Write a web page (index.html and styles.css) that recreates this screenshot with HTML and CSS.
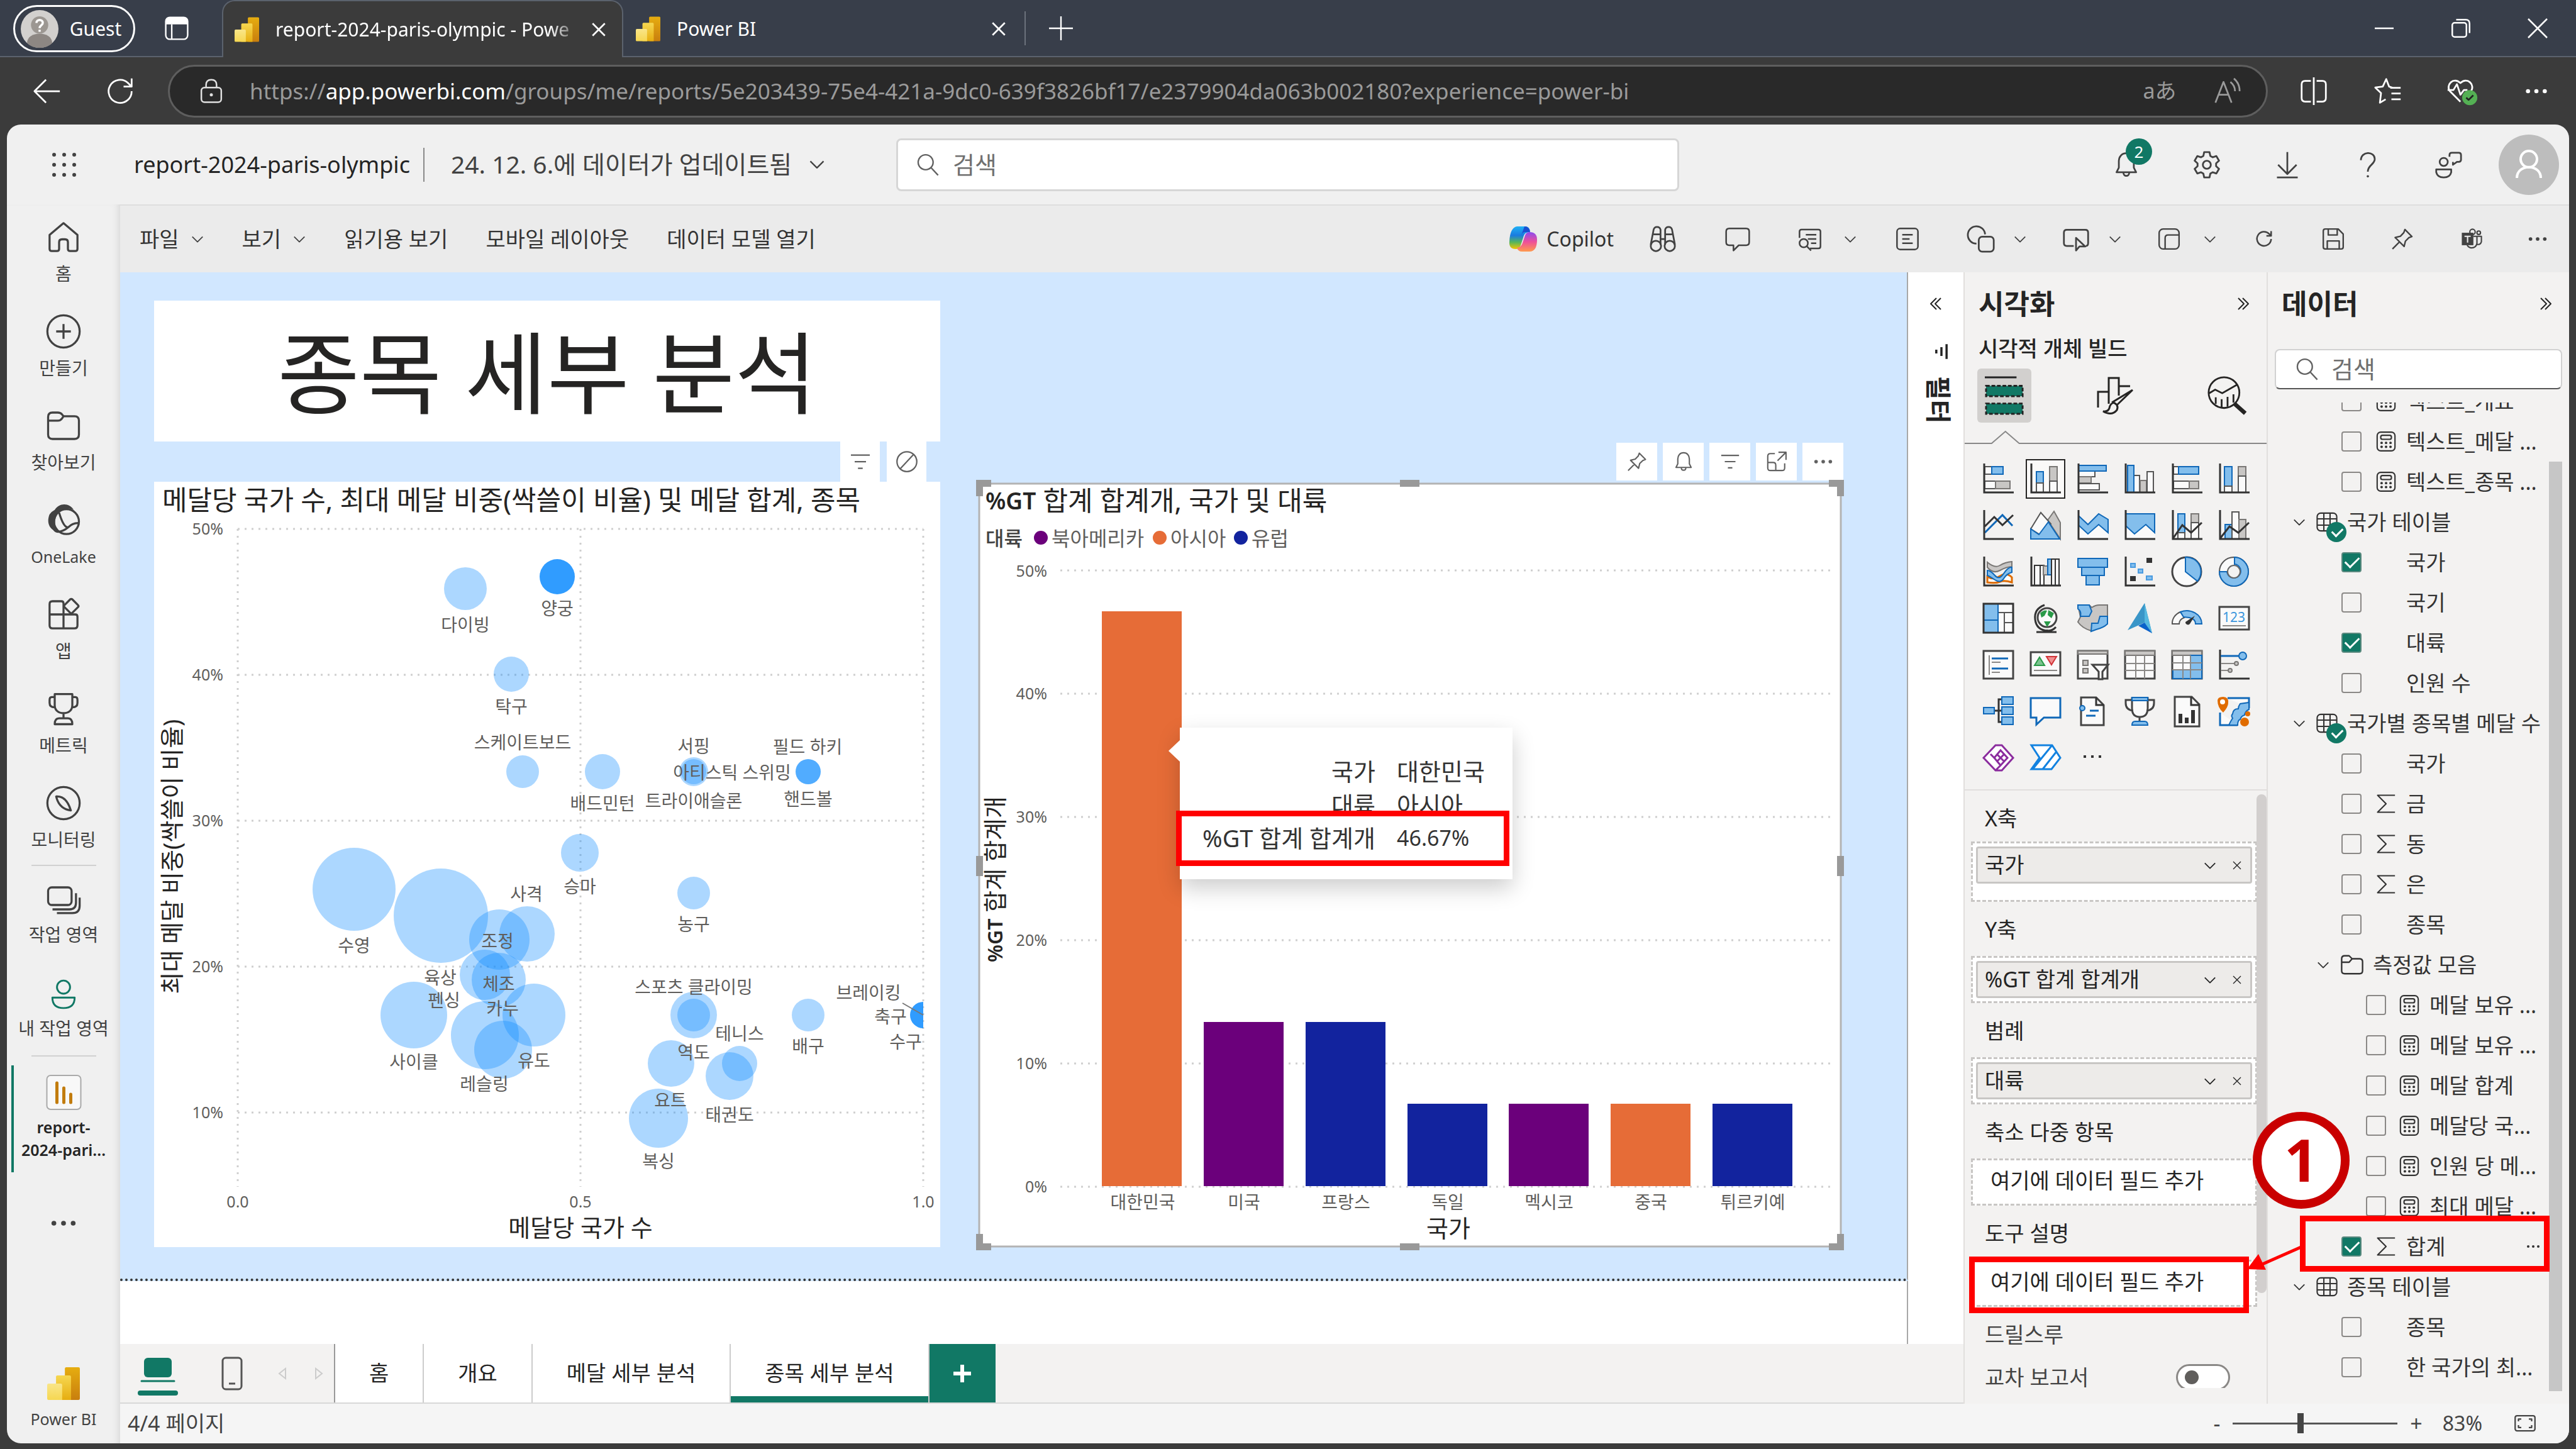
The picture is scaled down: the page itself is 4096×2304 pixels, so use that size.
FILE: index.html
```html
<!DOCTYPE html>
<html lang="ko">
<head>
<meta charset="utf-8">
<title>report-2024-paris-olympic - Power BI</title>
<link rel="stylesheet" href="styles.css">
</head>
<body>
<svg class="defs" aria-hidden="true">
  <defs>
    <linearGradient id="pb1" x1="0" y1="0" x2="0" y2="1"><stop offset="0" stop-color="#e6ad10"/><stop offset="1" stop-color="#c87e0e"/></linearGradient>
    <linearGradient id="pb2" x1="0" y1="0" x2="0" y2="1"><stop offset="0" stop-color="#f6d751"/><stop offset="1" stop-color="#e6ad10"/></linearGradient>
    <linearGradient id="pb3" x1="0" y1="0" x2="0" y2="1"><stop offset="0" stop-color="#f9e589"/><stop offset="1" stop-color="#f6d751"/></linearGradient>
    <linearGradient id="cp1" x1="0" y1="0" x2="0" y2="1"><stop offset="0" stop-color="#1fb0f5"/><stop offset=".4" stop-color="#1a7be0"/><stop offset=".7" stop-color="#57b65a"/><stop offset="1" stop-color="#f5c400"/></linearGradient>
    <linearGradient id="cp2" x1="0" y1="0" x2="0" y2="1"><stop offset="0" stop-color="#8a4cf0"/><stop offset=".5" stop-color="#ee4f9a"/><stop offset="1" stop-color="#ff9a4d"/></linearGradient>
    <symbol id="i-pbi" viewBox="0 0 24 24"><rect x="13" y="0" width="11" height="24" rx="1" fill="url(#pb1)"/><path d="M6.500 7q0-1 1-1h9q1 0 1 1v17h-11z" fill="url(#pb2)"/><path d="M0 13q0-1 1-1h9q1 0 1 1v11H1q-1 0-1-1z" fill="url(#pb3)"/></symbol>
    <symbol id="i-chev" viewBox="0 0 24 24"><path d="M3 8l9 9 9-9"/></symbol>
    <symbol id="i-x" viewBox="0 0 24 24"><path d="M3 3l18 18M21 3L3 21"/></symbol>
    <symbol id="i-search" viewBox="0 0 24 24"><circle cx="10" cy="9.500" r="7.500"/><path d="M15.500 15l7 7.500"/></symbol>
    <symbol id="i-dots" viewBox="0 0 24 24"><g class="solid"><circle cx="4" cy="12" r="2"/><circle cx="12" cy="12" r="2"/><circle cx="20" cy="12" r="2"/></g></symbol>
    <symbol id="i-pin" viewBox="0 0 24 24"><path d="M14.500 2.500l7 7-3 1.200-3.500 3.500-1.300 5.300-9-9L10 9.200l3.400-3.600zM9 15l-7 7"/></symbol>
    <symbol id="i-bell" viewBox="0 0 24 24"><path d="M12 2c4 0 6.500 3 6.500 7v5.500l2 4h-17l2-4V9c0-4 2.500-7 6.500-7zM9.500 19c0 3.500 5 3.500 5 0"/></symbol>
    <symbol id="i-filter" viewBox="0 0 24 24"><path d="M2 5h20M6 12h12M9.500 19h5"/></symbol>
    <symbol id="i-calc" viewBox="0 0 24 24"><rect x="2" y="1.500" width="20" height="21" rx="4"/><rect x="6" y="5" width="12" height="4.500" rx="2"/><g class="solid"><circle cx="7" cy="13.500" r="1.400"/><circle cx="12" cy="13.500" r="1.400"/><circle cx="17" cy="13.500" r="1.400"/><circle cx="7" cy="18" r="1.400"/><circle cx="12" cy="18" r="1.400"/><circle cx="17" cy="18" r="1.400"/></g></symbol>
    <symbol id="i-sum" viewBox="0 0 24 24"><path d="M22 2.500H2.500L12 12l-9.500 9.500H22"/></symbol>
    <symbol id="i-table" viewBox="0 0 24 24"><rect x="1" y="2" width="22" height="20" rx="4"/><path d="M8.500 2v20M15.500 2v20M1 8.500h22M1 15.500h22"/></symbol>
    <symbol id="i-folder" viewBox="0 0 24 24"><path d="M1.500 6q0-3 3-3H9l3 3h7.500q3 0 3 3v9q0 3-3 3h-15q-3 0-3-3zM1.500 9.500H9L12 6"/></symbol>
    <symbol id="i-dbl" viewBox="0 0 24 24"><path d="M4 3l9 9-9 9M11 3l9 9-9 9"/></symbol>
  </defs>
</svg>

<header class="browser">
  <div class="tabstrip">
    <button class="profile"><svg viewBox="0 0 24 24"><circle cx="12" cy="12" r="12" fill="#d2d0ce"/><path d="M4 21c0-8 16-8 16 0-4 4-12 4-16 0z" fill="#8d8783"/><circle cx="12" cy="9.500" r="5.500" fill="#9c9792"/><path d="M10 8.200c0-2.600 4-2.600 4 0 0 1.500-2 1.500-2 3.300M12 12.500v1.300" fill="none" stroke="#fff" stroke-width="1.400"/></svg>Guest</button>
    <button class="tabmenu" aria-label="탭 작업 메뉴"><svg class="ico w38" viewBox="0 0 24 24"><rect x="1" y="1" width="22" height="22" rx="4"/><path class="solid" d="M1 8V5q0-4 4-4h14q4 0 4 4v3z"/><path d="M7 8v15"/></svg></button>
    <div class="tab active"><svg class="pbi"><use href="#i-pbi"/></svg><span>report-2024-paris-olympic - Powe</span><button aria-label="닫기"><svg class="ico w26"><use href="#i-x"/></svg></button></div>
    <div class="tab"><svg class="pbi"><use href="#i-pbi"/></svg><span>Power BI</span><button aria-label="닫기"><svg class="ico w26"><use href="#i-x"/></svg></button></div>
    <button class="newtab" aria-label="새 탭"><svg class="ico w38" viewBox="0 0 24 24"><path d="M12 0v24M0 12h24"/></svg></button>
    <div class="winbtns">
      <button aria-label="최소화"><svg class="ico w30" viewBox="0 0 24 24"><path d="M0 12h24"/></svg></button>
      <button aria-label="복원"><svg class="ico w30" viewBox="0 0 24 24"><rect x="1" y="5" width="18" height="18" rx="3"/><path d="M6 1h12q5 0 5 5v12"/></svg></button>
      <button aria-label="닫기"><svg class="ico w30" viewBox="0 0 24 24"><path d="M0 0l24 24M24 0L0 24"/></svg></button>
    </div>
  </div>
  <div class="navbar">
    <button aria-label="뒤로"><svg class="ico w44" viewBox="0 0 24 24"><path d="M23 12H1M11 2L1 12l10 10"/></svg></button>
    <button aria-label="새로 고침"><svg class="ico w44" viewBox="0 0 24 24"><path d="M22 12a10 10 0 1 1-3-7l3 3M22 1v7h-7"/></svg></button>
    <div class="address">
      <svg class="ico w40" viewBox="0 0 24 24"><rect x="2.500" y="8.500" width="19" height="14" rx="3"/><path d="M7 8V6q0-5 5-5t5 5v2"/><circle class="solid" cx="12" cy="15.500" r="1.500"/></svg>
      <span class="url">https://<b>app.powerbi.com</b>/groups/me/reports/5e203439-75e4-421a-9dc0-639f3826bf17/e2379904da063b002180?experience=power-bi</span>
      <button class="lang" aria-label="번역">aあ</button>
      <button aria-label="소리내어 읽기"><svg class="ico w44" viewBox="0 0 24 24"><path d="M2 22L9 4l7 18M4.500 15h9M15 4q4 3 4 8M18 1q5 4 5 11"/></svg></button>
    </div>
    <button class="nb" aria-label="분할 화면"><svg class="ico w44" viewBox="0 0 24 24"><path d="M12 0v24M9.500 3H4.500q-3 0-3 3v12q0 3 3 3h5M14.500 3h5q3 0 3 3v12q0 3-3 3h-5"/></svg></button>
    <button class="nb" aria-label="즐겨찾기"><svg class="ico w44" viewBox="0 0 24 24"><path d="M16 9l-3-1-2.500-6.500L7.500 8 1 8.800l5 4.800L5 22l5-3M14 9h9M15 14h8M15 19h8"/></svg></button>
    <button class="nb" aria-label="브라우저 필수 요소"><svg class="ico w50" viewBox="0 0 27 24"><path d="M12 21L3 12C-1 7 6-1 12 5c6-6 13 2 9 7M1 11h5l3-5 3 9 3-4h3"/><circle cx="20" cy="17.500" r="6.500" fill="#54b054" stroke="none"/><path d="M17 17.500l2 2 4-4" stroke="#222"/></svg></button>
    <button class="nb" aria-label="더 보기"><svg class="ico w40"><use href="#i-dots"/></svg></button>
  </div>
</header>

<div class="app">
  <header class="top">
    <div class="crumb">
      <button class="waffle" aria-label="앱 시작 관리자"><svg viewBox="0 0 38 38"><g fill="#424242"><circle cx="3" cy="3" r="3"/><circle cx="19" cy="3" r="3"/><circle cx="35" cy="3" r="3"/><circle cx="3" cy="19" r="3"/><circle cx="19" cy="19" r="3"/><circle cx="35" cy="19" r="3"/><circle cx="3" cy="35" r="3"/><circle cx="19" cy="35" r="3"/><circle cx="35" cy="35" r="3"/></g></svg></button>
      <h1>report-2024-paris-olympic</h1>
      <button class="updated">24. 12. 6.에 데이터가 업데이트됨<svg class="ico w28"><use href="#i-chev"/></svg></button>
    </div>
    <label class="search"><svg class="ico w38"><use href="#i-search"/></svg><input type="search" placeholder="검색" aria-label="검색"></label>
    <div class="account">
      <button class="notify" aria-label="알림"><svg class="ico w44"><use href="#i-bell"/></svg><span class="badge">2</span></button>
      <button aria-label="설정"><svg class="ico w46" viewBox="0 0 24 24"><circle cx="12" cy="12" r="3.300"/><path d="M9.800 1.500h4.400l.7 3.200 1.900 1.100 3.100-1 2.200 3.800-2.400 2.200v2.400l2.400 2.200-2.200 3.800-3.100-1-1.900 1.100-.7 3.200H9.800l-.7-3.200-1.900-1.100-3.100 1-2.200-3.800 2.400-2.200v-2.400L1.900 8.600l2.200-3.800 3.100 1 1.900-1.100z"/></svg></button>
      <button aria-label="다운로드"><svg class="ico w44" viewBox="0 0 24 24"><path d="M12 1v18M4 12l8 8 8-8M3 23h18"/></svg></button>
      <button aria-label="도움말"><svg class="ico w44" viewBox="0 0 24 24"><path d="M6 8c0-8 12-8 12-1 0 5-6 5-6 11"/><circle class="solid" cx="12" cy="22" r="1"/></svg></button>
      <button aria-label="피드백"><svg class="ico w44" viewBox="0 0 24 24"><circle cx="8" cy="9.500" r="3.500"/><path d="M1.500 16h13v2.500q-1 4.500-6.500 4.500t-6.500-4.500zM13 5V3.500q0-2 2-2h6q2 0 2 2v4q0 2-2 2h-1.500L16 12V9.500"/></svg></button>
      <button aria-label="계정"><svg class="avatar" viewBox="0 0 96 96"><circle cx="48" cy="48" r="48" fill="#bdbdbd"/><circle cx="48" cy="39" r="13"/><path d="M29 69c0-23 38-23 38 0"/></svg></button>
    </div>
  </header>

  <nav class="rail">
    <a href="#home"><svg class="ico w56" viewBox="0 0 24 24"><path d="M2.500 10.500L12 2.500l9.500 8V20q0 1.500-1.500 1.500h-3.500q-1.500 0-1.500-1.500v-4.500q0-2-2-2h-2q-2 0-2 2V20q0 1.500-1.500 1.500H4q-1.500 0-1.500-1.500z"/></svg><span>홈</span></a>
    <a href="#create"><svg class="ico w56" viewBox="0 0 24 24"><circle cx="12" cy="12" r="11"/><path d="M12 7v10M7 12h10"/></svg><span>만들기</span></a>
    <a href="#browse"><svg class="ico w56" viewBox="0 0 24 24"><path d="M1.500 6q0-3 3-3H8q2 0 3 1.300L12 5.500h7.500q3 0 3 3V18q0 3-3 3h-15q-3 0-3-3zM1.500 8.500H8q2 0 3-1.500l1-1.500"/></svg><span>찾아보기</span></a>
    <a href="#onelake"><svg class="ico w56" viewBox="0 0 24 24"><ellipse cx="14" cy="13" rx="8.500" ry="8.500"/><path d="M5.500 14C4 20 8 21 12 19s5-5 10-5M9 7q3 10 6 10"/><path class="solid" d="M6 5c3-5 10-5 13 0-4-2-8 0-9 1-4 3-5 8-2 14C3 19 0 14 2.500 8q1.500-2 3.500-3z"/></svg><span class="en">OneLake</span></a>
    <a href="#apps"><svg class="ico w56" viewBox="0 0 24 24"><path d="M12 12V4.500Q12 3 10.500 3h-6Q2.500 3 2.500 5v14.500q0 2 2 2h15q2 0 2-2v-6q0-1.500-1.500-1.500H2.500M12 12v9.500"/><rect x="13.500" y="2.500" width="7.500" height="7.500" rx="1" transform="rotate(45 17.200 6.300)"/></svg><span>앱</span></a>
    <a href="#metrics"><svg class="ico w56" viewBox="0 0 24 24"><path d="M6 2h12v7.500c0 3.500-2.500 5.500-6 5.500s-6-2-6-5.500zM6 4H4Q2.500 4 2.500 6v2q0 3 3.500 3M18 4h2q1.500 0 1.500 2v2q0 3-3.500 3M12 15v3.500M6 22.500q0-4 3-4h6q3 0 3 4z"/></svg><span>메트릭</span></a>
    <a href="#monitor"><svg class="ico w56" viewBox="0 0 24 24"><circle cx="12" cy="12" r="11"/><path d="M7 7.500q7-.5 10 9.500-8-1-10-9.500z"/></svg><span>모니터링</span></a>
    <hr>
    <a class="tight" href="#workspaces"><svg class="ico w56" viewBox="0 0 24 24"><rect x="1.500" y="3" width="16" height="12" rx="2.500"/><path d="M4.500 18H16q4.500 0 4.500-4.500V7M7.500 20.500H18q5 0 5-5V10"/></svg><span>작업 영역</span></a>
    <a class="tight me" href="#my"><svg class="ico w56" viewBox="0 0 24 24"><circle cx="12" cy="6.500" r="5"/><path d="M3.500 14.500h17q0 8-8.500 8t-8.500-8z"/></svg><span>내 작업 영역</span></a>
    <hr>
    <a class="current" href="#report"><svg class="rep" viewBox="0 0 56 56"><rect x="1" y="1" width="54" height="54" rx="6" fill="#f8f8f8" stroke="#aaa" stroke-width="2"/><path d="M17 13v31M28 21v23M39 31v13" stroke="#c27c0e" stroke-width="5" stroke-linecap="round"/></svg><span class="en">report-<br>2024-pari...</span></a>
    <button class="more" aria-label="더 보기"><svg class="ico w50"><use href="#i-dots"/></svg></button>
    <a class="brand" href="#pbi"><svg class="logo"><use href="#i-pbi"/></svg><span class="en">Power BI</span></a>
  </nav>

  <div class="work">
    <div class="ribbon">
      <button>파일<svg class="ico w22"><use href="#i-chev"/></svg></button>
      <button>보기<svg class="ico w22"><use href="#i-chev"/></svg></button>
      <button>읽기용 보기</button>
      <button>모바일 레이아웃</button>
      <button>데이터 모델 열기</button>
      <div class="tools">
        <button class="copilot"><svg viewBox="0 0 44 40"><path d="M12 0h14q5 0 7 7l-5 3q-4 0-6 8l-4 12q-2 6-8 6-11 0-10-12Q1 2 12 0z" fill="url(#cp1)"/><path d="M24 0q8 0 9 9h-8q-4 0-6 5z" fill="#1b4fd0"/><path d="M32 9q12 0 12 12 0 19-12 19H20q-6 0-8-6 7-1 9-8l4-12q2-5 7-5z" fill="url(#cp2)"/></svg>Copilot</button>
        <button class="t" aria-label="찾기"><svg class="ico w44" viewBox="0 0 24 24"><circle cx="6" cy="18" r="4.500"/><circle cx="18" cy="18" r="4.500"/><path d="M1.500 17L4 4q.5-2.500 3-2.500T10 4v13M22.500 17L20 4q-.5-2.500-3-2.500T14 4v13M4 8h6M14 8h6M10 12h4"/></svg></button>
        <button class="t" aria-label="메모"><svg class="ico w40" viewBox="0 0 24 24"><path d="M4 2h16q3 0 3 3v10q0 3-3 3h-7l-5 5v-5H4q-3 0-3-3V5q0-3 3-3z"/></svg></button>
        <button class="d" aria-label="탐색"><svg class="ico w40" viewBox="0 0 24 24"><path d="M2 11V5q0-2 2-2h16q2 0 2 2v14q0 2-2 2h-8M8 8h10M10 12h8M13 16h5"/><circle cx="6" cy="16" r="4"/><path d="M9 19l4 4"/></svg><svg class="ico w22"><use href="#i-chev"/></svg></button>
        <button class="t" aria-label="텍스트 상자"><svg class="ico w40" viewBox="0 0 24 24"><rect x="2" y="2" width="20" height="20" rx="3"/><path d="M7 8h10M7 12h7M7 16h10"/></svg></button>
        <button class="d" aria-label="도형"><svg class="ico w44" viewBox="0 0 24 24"><path d="M8 16a7.500 7.500 0 1 1 7.500-8"/><rect x="10" y="10" width="13" height="13" rx="3"/></svg><svg class="ico w22"><use href="#i-chev"/></svg></button>
        <button class="d" aria-label="단추"><svg class="ico w44" viewBox="0 0 24 24"><path d="M10 18H4q-2.500 0-2.500-2.500v-9Q1.500 4 4 4h16q2.500 0 2.500 2.500v9q0 2.500-2 2.500M12 11v11l3-3.500h5z"/></svg><svg class="ico w22"><use href="#i-chev"/></svg></button>
        <button class="d" aria-label="시각적 개체 상호 작용"><svg class="ico w38" viewBox="0 0 24 24"><rect x="2" y="2" width="20" height="20" rx="4"/><path d="M8 22V11q0-3 3-3h11"/></svg><svg class="ico w22"><use href="#i-chev"/></svg></button>
        <button class="s" aria-label="새로 고침"><svg class="ico w30" viewBox="0 0 24 24"><path d="M21 12a9 9 0 1 1-2.500-6.500L21 8M21 2v6h-6"/></svg></button>
        <button class="s" aria-label="저장"><svg class="ico w38" viewBox="0 0 24 24"><path d="M4 2h13l5 5v13q0 2-2 2H4q-2 0-2-2V4q0-2 2-2zM7 2v6h9V2M6 22v-8h12v8"/></svg></button>
        <button class="s" aria-label="고정"><svg class="ico w38"><use href="#i-pin"/></svg></button>
        <button class="s" aria-label="Teams"><svg class="ico w34" viewBox="0 0 24 24"><path class="solid" d="M1 5h13v14H1z"/><path d="M4 9h7M7.500 9v7" stroke="#ebebeb"/><circle cx="13" cy="4" r="3"/><circle cx="20" cy="5" r="2"/><path d="M14 9h4v8q-1 5-6 5-3 0-5-3M18 9h5v6q-1 4-5 3"/></svg></button>
        <button class="s" aria-label="더 보기"><svg class="ico w34"><use href="#i-dots"/></svg></button>
      </div>
    </div>

    <div class="stage">
      <main class="canvas">
        <div class="page">
          <section class="col">
            <h2 class="title-card">종목 세부 분석</h2>
            <div class="hover left">
              <button aria-label="필터"><svg class="ico w36"><use href="#i-filter"/></svg></button>
              <button aria-label="상호 작용 없음"><svg class="ico w36" viewBox="0 0 24 24"><circle cx="12" cy="12" r="10.500"/><path d="M19 4.500L5 19.500"/></svg></button>
            </div>
            <div class="visual">
              <svg class="chart" viewBox="0 0 1250 1217">
                <clipPath id="plot"><rect x="133" y="0" width="1090" height="1121"/></clipPath>
                <g class="grid"><path d="M133 75H1223M133 307H1223M133 539H1223M133 771H1223M133 1003H1223M133 75V1121M678 75V1121M1223 75V1121"/></g>
                <g class="bubbles" clip-path="url(#plot)">
                  <circle cx="495" cy="170" r="34"/><circle class="b3" cx="641" cy="151" r="28"/><circle cx="568" cy="306" r="28"/>
                  <circle cx="586" cy="461" r="26"/><circle cx="713" cy="461" r="28"/><circle cx="858" cy="461" r="23"/><circle cx="858" cy="461" r="20"/><circle class="b2" cx="1040" cy="461" r="20"/>
                  <circle cx="677" cy="590" r="30"/><circle cx="318" cy="648" r="66"/><circle cx="456" cy="690" r="75"/><circle cx="593" cy="719" r="44"/><circle cx="549" cy="728" r="48"/>
                  <circle cx="526" cy="784" r="40"/><circle cx="548" cy="792" r="43"/><circle cx="604" cy="848" r="50"/><circle cx="526" cy="880" r="54"/><circle cx="555" cy="903" r="46"/><circle cx="413" cy="848" r="53"/>
                  <circle cx="858" cy="654" r="26"/><circle cx="858" cy="848" r="37"/><circle cx="858" cy="848" r="26"/><circle cx="1040" cy="848" r="26"/>
                  <circle cx="931" cy="925" r="28"/><circle cx="915" cy="945" r="38"/><circle cx="822" cy="925" r="37"/><circle cx="802" cy="1012" r="47"/><circle class="b3" cx="1223" cy="848" r="21"/>
                </g>
                <path d="M1190 829L1223 848" stroke="#777" stroke-width="2"/>
                <text class="vtitle" x="13" y="28">메달당 국가 수, 최대 메달 비중(싹쓸이 비율) 및 메달 합계, 종목</text>
                <g class="ytick"><text x="110" y="74">50%</text><text x="110" y="306">40%</text><text x="110" y="538">30%</text><text x="110" y="770">20%</text><text x="110" y="1002">10%</text></g>
                <g class="xtick"><text x="133" y="1144">0.0</text><text x="678" y="1144">0.5</text><text x="1223" y="1144">1.0</text></g>
                <g class="names">
                  <text x="495" y="227">다이빙</text><text x="641" y="201">양궁</text><text x="568" y="357">탁구</text><text x="586" y="414">스케이트보드</text><text x="713" y="511">배드민턴</text>
                  <text x="858" y="420">서핑</text><text x="919" y="462">아티스틱 스위밍</text><text x="858" y="507">트라이애슬론</text><text x="1039" y="421">필드 하키</text><text x="1040" y="504">핸드볼</text>
                  <text x="677" y="643">승마</text><text x="318" y="737">수영</text><text x="455" y="788">육상</text><text x="592" y="655">사격</text><text x="546" y="730">조정</text><text x="461" y="824">펜싱</text><text x="548" y="798">체조</text><text x="554" y="837">카누</text>
                  <text x="604" y="920">유도</text><text x="525" y="957">레슬링</text><text x="413" y="922">사이클</text><text x="858" y="703">농구</text><text x="858" y="803">스포츠 클라이밍</text><text x="858" y="907">역도</text><text x="1040" y="897">배구</text>
                  <text x="931" y="877">테니스</text><text x="915" y="1006">태권도</text><text x="821" y="983">요트</text><text x="802" y="1080">복싱</text><text x="1136" y="812">브레이킹</text><text x="1171" y="850">축구</text><text x="1195" y="890">수구</text>
                </g>
                <g class="atitle"><text x="678" y="1185">메달당 국가 수</text><text transform="translate(27 596) rotate(-90)">최대 메달 비중(싹쓸이 비율)</text></g>
              </svg>
            </div>
          </section>
          <section class="col">
            <div class="hover right">
              <button aria-label="고정"><svg class="ico w34"><use href="#i-pin"/></svg></button>
              <button aria-label="알림"><svg class="ico w34"><use href="#i-bell"/></svg></button>
              <button aria-label="필터"><svg class="ico w34"><use href="#i-filter"/></svg></button>
              <button aria-label="포커스 모드"><svg class="ico w34" viewBox="0 0 24 24"><path d="M10 3H5Q2 3 2 6v13q0 3 3 3h13q3 0 3-3v-5M2 13h6q3 0 3 3v6M14 1.500h8.500V10M22.500 1.500L13 11"/></svg></button>
              <button aria-label="추가 옵션"><svg class="ico w34"><use href="#i-dots"/></svg></button>
            </div>
            <div class="visual selected">
              <svg class="chart" viewBox="0 0 1372 1215">
                <g class="grid"><path d="M130 139H1354M130 335H1354M130 531H1354M130 727H1354M130 923H1354M130 1119H1354"/></g>
                <g><rect class="as" x="196" y="204" width="127" height="914"/><rect class="na" x="358" y="857" width="127" height="261"/><rect class="eu" x="520" y="857" width="127" height="261"/><rect class="eu" x="682" y="987" width="127" height="131"/><rect class="na" x="843" y="987" width="127" height="131"/><rect class="as" x="1005" y="987" width="127" height="131"/><rect class="eu" x="1167" y="987" width="127" height="131"/></g>
                <text class="vtitle" x="11" y="27"><tspan class="sb">%GT</tspan> 합계 합계개, 국가 및 대륙</text>
                <g class="legend"><text class="md" x="11" y="87">대륙</text><circle class="na" cx="99" cy="87" r="11"/><text x="116" y="87">북아메리카</text><circle class="as" cx="288" cy="87" r="11"/><text x="305" y="87">아시아</text><circle class="eu" cx="417" cy="87" r="11"/><text x="434" y="87">유럽</text></g>
                <g class="ytick"><text x="109" y="139">50%</text><text x="109" y="334">40%</text><text x="109" y="530">30%</text><text x="109" y="726">20%</text><text x="109" y="922">10%</text><text x="109" y="1118">0%</text></g>
                <g class="names"><text x="261" y="1143">대한민국</text><text x="422" y="1143">미국</text><text x="584" y="1143">프랑스</text><text x="746" y="1143">독일</text><text x="907" y="1143">멕시코</text><text x="1069" y="1143">중국</text><text x="1231" y="1143">튀르키예</text></g>
                <g class="atitle"><text x="747" y="1184">국가</text><text transform="translate(25 630) rotate(-90)"><tspan class="sb">%GT</tspan> 합계 합계개</text></g>
                <path class="frame" d="M1 1H1371V1214H1z"/>
                <path class="handles" d="M-4-5H20V6H7V21H-4zM1376-5H1352V6H1365V21H1376zM-4 1220H20V1209H7V1194H-4zM1376 1220H1352V1209H1365V1194H1376zM670-5h31v11h-31zM670 1209h31v11h-31zM-4 593H7v32H-4zM1365 593h11v32h-11z"/>
              </svg>
              <div class="tip">
                <dl><dt>국가</dt><dd>대한민국</dd><dt>대륙</dt><dd>아시아</dd><dt>%GT 합계 합계개</dt><dd class="num">46.67%</dd></dl>
                <div class="mark"></div>
              </div>
            </div>
          </section>
        </div>
        <div class="below"></div>
        <div class="pagetabs">
          <div class="views">
            <button class="desk on" aria-label="데스크톱 레이아웃"><svg viewBox="0 0 64 62"><rect x="10" y="2" width="44" height="31" rx="6" fill="#117865"/><path d="M6 39h52" stroke="#117865" stroke-width="3" stroke-linecap="round"/><rect y="54" width="64" height="8" rx="4" fill="#117865"/></svg></button>
            <button class="phone" aria-label="모바일 레이아웃"><svg viewBox="0 0 34 54"><rect x="2" y="2" width="30" height="50" rx="5"/><path d="M12 43h10"/></svg></button>
            <button class="arrow" aria-label="이전"><svg viewBox="0 0 14 20"><path d="M12 2v16L2 10z"/></svg></button>
            <button class="arrow" aria-label="다음"><svg viewBox="0 0 14 20"><path d="M2 2v16l10-8z"/></svg></button>
          </div>
          <button class="pt">홈</button><button class="pt">개요</button><button class="pt">메달 세부 분석</button><button class="pt on">종목 세부 분석</button>
          <button class="add" aria-label="페이지 추가"><svg viewBox="0 0 28 28"><path d="M14 0v28M0 14h28"/></svg></button>
        </div>
      </main>

      <aside class="filters">
        <button aria-label="필터 창 확장"><svg class="ico w24 flip"><use href="#i-dbl"/></svg></button>
        <svg class="ico w28 turned"><use href="#i-filter"/></svg>
        <h3>필터</h3>
      </aside>

      <aside class="viz">
        <div class="ph"><h3>시각화</h3><button aria-label="접기"><svg class="ico w24"><use href="#i-dbl"/></svg></button></div>
        <h4>시각적 개체 빌드</h4>
        <div class="modes">
          <button class="on" aria-label="빌드"><svg viewBox="0 0 64 64"><path d="M0 2h52" stroke="#222" stroke-width="3"/><rect x="2" y="16" width="60" height="17" fill="#117865"/><rect x="2" y="45" width="60" height="17" fill="#117865"/><g fill="none" stroke="#222" stroke-width="3" stroke-dasharray="6 3"><rect x="2" y="16" width="60" height="17"/><rect x="2" y="45" width="60" height="17"/></g></svg></button>
          <button aria-label="서식"><svg viewBox="0 0 60 62" class="line"><path d="M2 50V25h17M19 44V3h16v28M35 16h18M57 22L32 46q-5-5-7-3-4 2-5 8-2 6-10 5 14 8 22-2 2-4 0-8M57 22L24 42"/></svg></button>
          <button aria-label="분석"><svg viewBox="0 0 66 64" class="line"><circle cx="28" cy="27" r="26"/><path d="M3 28l10-6 12 6 26-15M14 35v11M24 38v14M34 34v17M44 30v14"/><path d="M46 46l18 16" stroke-width="7"/></svg></button>
        </div>
        <svg class="notch" viewBox="0 0 482 24" preserveAspectRatio="none"><path d="M0 21H43L65 2L87 21H482"/></svg>
        <div class="gallery">
          <button aria-label="누적 가로 막대형"><svg viewBox="0 0 49 48"><rect class="w" x="3" y="5" width="11" height="12"/><rect class="b" x="14" y="5" width="18" height="12"/><rect class="w" x="3" y="28" width="17" height="12"/><rect class="g" x="20" y="28" width="23" height="12"/><path class="k" d="M2 0v46h47"/></svg></button>
          <button class="on" aria-label="누적 세로 막대형"><svg viewBox="0 0 49 48"><rect class="b" x="10" y="13" width="11" height="18"/><rect class="w" x="10" y="31" width="11" height="15"/><rect class="g" x="31" y="5" width="12" height="23"/><rect class="w" x="31" y="28" width="12" height="18"/><path class="k" d="M2 0v46h47"/></svg></button>
          <button aria-label="묶은 가로 막대형"><svg viewBox="0 0 49 48"><rect class="w" x="2" y="12" width="26" height="9"/><rect class="g" x="2" y="21" width="20" height="10"/><rect class="w" x="2" y="32" width="33" height="10"/><rect class="b" x="2" y="3" width="44" height="9"/><path class="k" d="M2 0v46h47"/></svg></button>
          <button aria-label="묶은 세로 막대형"><svg viewBox="0 0 49 48"><rect class="w" x="14" y="19" width="10" height="27"/><rect class="g" x="25" y="27" width="10" height="19"/><rect class="w" x="36" y="13" width="10" height="33"/><rect class="b" x="5" y="3" width="10" height="43"/><path class="k" d="M2 0v46h47"/></svg></button>
          <button aria-label="100% 누적 가로"><svg viewBox="0 0 49 48"><rect class="w" x="3" y="5" width="8" height="12"/><rect class="b" x="11" y="5" width="32" height="12"/><rect class="w" x="3" y="28" width="25" height="12"/><rect class="g" x="28" y="28" width="15" height="12"/><path class="k" d="M2 0v46h47"/></svg></button>
          <button aria-label="100% 누적 세로"><svg viewBox="0 0 49 48"><rect class="b" x="9" y="5" width="12" height="31"/><rect class="w" x="9" y="36" width="12" height="10"/><rect class="g" x="31" y="5" width="12" height="15"/><rect class="w" x="31" y="20" width="12" height="26"/><path class="k" d="M2 0v46h47"/></svg></button>

          <button aria-label="꺾은선형"><svg viewBox="0 0 49 48"><path class="bl" d="M3 36L31 8l16 17"/><path class="k" d="M3 26L18 11l13 13L48 8M2 0v46h47"/></svg></button>
          <button aria-label="영역형"><svg viewBox="0 0 49 48"><path class="g" d="M28 16L38 2l10 18v26z"/><path class="w" d="M1 30L17 4l16 18-16 18z"/><path class="b" d="M1 30l13 9 15-20 18 27H1z"/></svg></button>
          <button aria-label="누적 영역형"><svg viewBox="0 0 49 48"><path class="wf" d="M2 24l15 15 17-15 15 13v9H2z"/><path class="b" d="M2 9l15 14L34 6l15 9v21L34 23 17 38 2 24z"/><path class="k" d="M2 0v46h47"/></svg></button>
          <button aria-label="100% 누적 영역형"><svg viewBox="0 0 49 48"><path class="wf" d="M2 25l15 13 17-15 15 13v10H2z"/><path class="b" d="M2 6h46v30L34 23 16 38 2 25z"/><path class="k" d="M2 0v46h47"/></svg></button>
          <button aria-label="꺾은선형 및 누적 세로"><svg viewBox="0 0 49 48"><rect class="b" x="10" y="6" width="11" height="30"/><rect class="w" x="10" y="36" width="11" height="10"/><rect class="g" x="31" y="6" width="12" height="14"/><rect class="w" x="31" y="20" width="12" height="26"/><path class="k" d="M3 44L17 24l14 12L48 20M2 0v46h47"/></svg></button>
          <button aria-label="꺾은선형 및 묶은 세로"><svg viewBox="0 0 49 48"><rect class="b" x="10" y="23" width="11" height="23"/><rect class="w" x="21" y="3" width="11" height="43"/><rect class="g" x="32" y="15" width="11" height="31"/><path class="k" d="M3 44L17 26l14 10L48 20M2 0v46h47"/></svg></button>

          <button aria-label="리본"><svg viewBox="0 0 49 48"><path class="o" d="M7 32q10 6 20-1t19 2v8q-12-4-19-1t-20 1z"/><path class="g" d="M7 9q12 10 20 5t19-6v8q-8 0-19 6T7 17z"/><path class="b" d="M7 22q5 0 12 8t14-3 13-10v8q-8 2-13 10t-14 2-12-7z"/><path class="k" d="M2 0v46h47"/></svg></button>
          <button aria-label="폭포"><svg viewBox="0 0 49 48"><rect class="w d" x="7" y="14" width="9" height="32"/><rect class="w d" x="16" y="14" width="6" height="32"/><rect class="g" x="21" y="15" width="7" height="14"/><path class="b" d="M28 4h6v25h-6z"/><rect class="w d" x="34" y="4" width="6" height="42"/><rect class="w d" x="40" y="4" width="6" height="42"/><path class="k" d="M2 0v46h47"/></svg></button>
          <button aria-label="깔때기"><svg viewBox="0 0 49 48"><path class="b" d="M1 3h47v14H1zM7 17h36v13H7zM14 30h21v15H14z"/></svg></button>
          <button aria-label="분산형"><svg viewBox="0 0 49 48"><path class="k" d="M2 0v46h47"/><path class="kf" d="M35 2h9v8h-9zM9 31h9v8H9z"/><path class="bf" d="M10 11h7v6h-7zM22 20h7v6h-7zM35 31h9v6h-9z"/></svg></button>
          <button aria-label="원형"><svg viewBox="0 0 49 48"><circle class="w k1" cx="24" cy="24" r="23"/><path class="b" d="M22 1v23l19 15A23 23 0 0 0 22 1z"/></svg></button>
          <button aria-label="도넛형"><svg viewBox="0 0 49 48"><circle class="w" cx="24" cy="24" r="23"/><path class="b" d="M25 1A23 23 0 1 1 1 24h12a11 11 0 1 0 12-12z"/><circle class="pf" cx="24" cy="24" r="10"/></svg></button>

          <button aria-label="트리맵"><svg viewBox="0 0 49 48"><path class="w" d="M24 1h24v46H24zM24 15h24M34 15v32M34 31h14"/><path class="b" d="M1 1h23v46H1zM1 27h23"/><path class="k" d="M1 1h47v46H1z"/></svg></button>
          <button aria-label="지도"><svg viewBox="0 0 49 48"><circle class="w k1" cx="27" cy="23" r="15"/><path class="gf" d="M16 16q6-6 11-4l-4 8-5 3zM29 11l9 5-4 8-6-5zM22 29h11l-6 9z"/><path class="k" d="M23 3Q6 9 8 26t20 18q8 0 13-6M10 46h32M27 42v4"/></svg></button>
          <button aria-label="등치 지역도"><svg viewBox="0 0 49 48"><path class="g" d="M1 3h18l4 4q6-4 12-4h13v28q-6 6-18 9l-8 4Q8 40 1 30l4-8z"/><path class="b" d="M1 3h18l4 10-4 8H5q2-8-4-12zM23 32h10l3-11h12v12q-6 6-18 9l-8 3z"/></svg></button>
          <button aria-label="Azure 지도"><svg viewBox="0 0 49 48"><path d="M32 0L5 43l27-12 12 17z" fill="#3a96c8"/><path d="M32 0l12 48-12-17z" fill="#55b8e0"/><path d="M22 36l10-5 12 17z" fill="#0b62ca"/></svg></button>
          <button aria-label="계기"><svg viewBox="0 0 49 48"><path class="w" d="M1 33a23 20 0 0 1 13-19l6 9q-8 3-8 10z"/><path class="b" d="M14 14a24 21 0 0 1 34 19H38q0-8-10-10l-9-1z"/><path class="kf" d="M37 20l-8 13a4 4 0 0 1-7-3z"/></svg></button>
          <button aria-label="카드"><svg viewBox="0 0 49 48"><path class="w k1" d="M1 6h47v36H1z"/><path class="gl" d="M6 36h37"/><text x="24" y="30" class="n123">123</text></svg></button>

          <button aria-label="여러 행 카드"><svg viewBox="0 0 49 48"><path class="w k1" d="M1 2h47v44H1z"/><path class="gl" d="M10 9v31M14 20h14M14 36h13"/><path class="bl" d="M14 14h26M14 30h26"/></svg></button>
          <button aria-label="KPI"><svg viewBox="0 0 49 48"><path class="w k1" d="M1 4h47v37H1z"/><path d="M15 12l8 13H7z" fill="#7cc490" stroke="#2a9a48" stroke-width="2"/><path d="M34 24l8-13H26z" fill="#f09090" stroke="#d13438" stroke-width="2"/><path class="gl" d="M6 33h37"/></svg></button>
          <button aria-label="슬라이서"><svg viewBox="0 0 49 48"><path class="w k1" d="M1 2h47v44H1z"/><path class="g" d="M1 2h47v5H1zM9 17h8v8H9zM9 30h8v7H9z"/><path class="w k1" d="M24 24h25l-9 11v12h-6V35z"/></svg></button>
          <button aria-label="테이블"><svg viewBox="0 0 49 48"><path class="w k1" d="M1 2h47v44H1z"/><path class="g" d="M1 2h47v7H1z"/><path class="gl" d="M1 22h47M1 33h47M18 9v37M32 9v37"/></svg></button>
          <button aria-label="행렬"><svg viewBox="0 0 49 48"><path class="w k1" d="M1 2h47v44H1z"/><path class="g" d="M1 2h47v7H1z"/><path class="b" d="M30 9h18v37H2V32h28z"/><path class="gl" d="M1 21h47M1 32h47M18 9v37M30 9v37"/></svg></button>
          <button aria-label="주요 영향 요인"><svg viewBox="0 0 49 48"><path class="k" d="M2 0v46h47"/><path class="bl" d="M3 10h30"/><circle class="b" cx="38" cy="10" r="6"/><path class="gl" d="M3 22h22M3 33h12"/><circle class="g" cx="28" cy="22" r="3"/><circle class="g" cx="18" cy="33" r="3"/></svg></button>

          <button aria-label="분해 트리"><svg viewBox="0 0 49 48"><path class="k" d="M16 23h14M30 5h-5v36h5"/><path class="b" d="M1 18h17v10H1zM30 1h18v12H30zM30 17h18v12H30zM30 33h18v12H30z"/></svg></button>
          <button aria-label="Q&amp;A"><svg viewBox="0 0 49 48"><path class="wf bl" d="M1 3h47v31H22L10 45V34H1z"/></svg></button>
          <button aria-label="설명"><svg viewBox="0 0 49 48"><path class="w k1" d="M6 2h24l12 12v32H6z"/><path class="k" d="M30 2v12h12"/><path class="bl" d="M20 23h14M14 31h15"/><circle class="b" cx="8" cy="19" r="4"/></svg></button>
          <button aria-label="메트릭"><svg viewBox="0 0 49 48"><path class="w k1" d="M12 3h25v16q0 14-12.500 14T12 19zM12 6H2v5q0 11 12 12M37 6h10v5q0 11-12 12M24 33v8"/><path class="b" d="M12 2h25v5H12zM12 46q0-6 5-6h15q5 0 5 6z"/></svg></button>
          <button aria-label="페이지를 매긴 보고서"><svg viewBox="0 0 49 48"><path class="w k1" d="M5 1h27l12 12v35H5z"/><path class="k" d="M31 1v13h13"/><path class="kf" d="M11 28h6v15h-6zM21 34h6v9h-6zM31 22h6v21h-6z"/></svg></button>
          <button aria-label="ArcGIS"><svg viewBox="0 0 49 48"><path class="wf bl" d="M14 3h34v16M2 26v20h28"/><path class="b" d="M34 12q-3 4-3 8-8 0-9 8-3 3 0 7-4 6-6 11h14q0-8 4-9 2-6 7-7 1-6 7-9V10z"/><path d="M-2 7q0-6 9-6t8 10q0 6-8 15-9-8-9-19z" fill="#e06c00"/><circle cx="6" cy="9" r="4" fill="#fff"/><circle cx="41" cy="41" r="7" fill="#e06c00"/><circle cx="46" cy="28" r="4" fill="#e06c00"/></svg></button>

          <button aria-label="Power Apps"><svg viewBox="0 0 49 48"><path class="pl" d="M1 24L20 4h10l18 20-18 20H20zM28 12l11 12-11 12-10-12zM22 18l12 12M34 18L22 30M18 24l-6-6M20 44l8-8"/></svg></button>
          <button aria-label="Power Automate"><svg viewBox="0 0 49 48"><path class="al" d="M2 4h33l13 20-14 18H2l13-18zM35 4L4 42M42 14L20 42"/></svg></button>
          <button aria-label="더 많은 시각적 개체"><svg viewBox="0 0 49 48"><path class="kf" d="M10 20h4v4h-4zM22 20h4v4h-4zM34 20h4v4h-4z"/></svg></button>
        </div>
        <div class="wells">
          <h5>X축</h5>
          <div class="well tall"><div class="pill"><span>국가</span><svg class="ico w22"><use href="#i-chev"/></svg><svg class="ico w16"><use href="#i-x"/></svg></div></div>
          <h5>Y축</h5>
          <div class="well"><div class="pill"><span>%GT 합계 합계개</span><svg class="ico w22"><use href="#i-chev"/></svg><svg class="ico w16"><use href="#i-x"/></svg></div></div>
          <h5>범례</h5>
          <div class="well"><div class="pill"><span>대륙</span><svg class="ico w22"><use href="#i-chev"/></svg><svg class="ico w16"><use href="#i-x"/></svg></div></div>
          <h5>축소 다중 항목</h5>
          <div class="well empty">여기에 데이터 필드 추가</div>
          <h5>도구 설명</h5>
          <div class="well empty">여기에 데이터 필드 추가<div class="mark"></div></div>
          <h5 class="drill">드릴스루</h5>
          <label class="cross">교차 보고서<input type="checkbox" role="switch"></label>
          <div class="thumb"></div>
        </div>
      </aside>

      <aside class="data">
        <div class="ph"><h3>데이터</h3><button aria-label="접기"><svg class="ico w24"><use href="#i-dbl"/></svg></button></div>
        <label class="find"><svg class="ico w38"><use href="#i-search"/></svg><input type="search" placeholder="검색" aria-label="필드 검색"></label>
        <div class="tree">
          <label class="f"><input type="checkbox"><svg class="ico w34"><use href="#i-calc"/></svg><span>텍스트_개요</span></label>
          <label class="f"><input type="checkbox"><svg class="ico w34"><use href="#i-calc"/></svg><span>텍스트_메달 ...</span></label>
          <label class="f"><input type="checkbox"><svg class="ico w34"><use href="#i-calc"/></svg><span>텍스트_종목 ...</span></label>
          <div class="tb"><svg class="ico w22"><use href="#i-chev"/></svg><svg class="ico w34"><use href="#i-table"/></svg><i class="ok"></i><span>국가 테이블</span></div>
          <label class="f"><input type="checkbox" checked><i></i><span>국가</span></label>
          <label class="f"><input type="checkbox"><i></i><span>국기</span></label>
          <label class="f"><input type="checkbox" checked><i></i><span>대륙</span></label>
          <label class="f"><input type="checkbox"><i></i><span>인원 수</span></label>
          <div class="tb"><svg class="ico w22"><use href="#i-chev"/></svg><svg class="ico w34"><use href="#i-table"/></svg><i class="ok"></i><span>국가별 종목별 메달 수</span></div>
          <label class="f"><input type="checkbox"><i></i><span>국가</span></label>
          <label class="f"><input type="checkbox"><svg class="ico w34"><use href="#i-sum"/></svg><span>금</span></label>
          <label class="f"><input type="checkbox"><svg class="ico w34"><use href="#i-sum"/></svg><span>동</span></label>
          <label class="f"><input type="checkbox"><svg class="ico w34"><use href="#i-sum"/></svg><span>은</span></label>
          <label class="f"><input type="checkbox"><i></i><span>종목</span></label>
          <div class="tb sub"><svg class="ico w22"><use href="#i-chev"/></svg><svg class="ico w38"><use href="#i-folder"/></svg><span>측정값 모음</span></div>
          <label class="f sub"><input type="checkbox"><svg class="ico w34"><use href="#i-calc"/></svg><span>메달 보유 ...</span></label>
          <label class="f sub"><input type="checkbox"><svg class="ico w34"><use href="#i-calc"/></svg><span>메달 보유 ...</span></label>
          <label class="f sub"><input type="checkbox"><svg class="ico w34"><use href="#i-calc"/></svg><span>메달 합계</span></label>
          <label class="f sub"><input type="checkbox"><svg class="ico w34"><use href="#i-calc"/></svg><span>메달당 국...</span></label>
          <label class="f sub"><input type="checkbox"><svg class="ico w34"><use href="#i-calc"/></svg><span>인원 당 메...</span></label>
          <label class="f sub"><input type="checkbox"><svg class="ico w34"><use href="#i-calc"/></svg><span>최대 메달 ...</span></label>
          <label class="f"><input type="checkbox" checked><svg class="ico w34"><use href="#i-sum"/></svg><span>합계</span><svg class="ico w24 end"><use href="#i-dots"/></svg></label>
          <div class="tb"><svg class="ico w22"><use href="#i-chev"/></svg><svg class="ico w34"><use href="#i-table"/></svg><span>종목 테이블</span></div>
          <label class="f"><input type="checkbox"><i></i><span>종목</span></label>
          <label class="f"><input type="checkbox"><i></i><span>한 국가의 최...</span></label>
        </div>
        <div class="bar"></div>
        <div class="mark row-mark"></div>
        <svg class="pointer" viewBox="0 0 90 50"><path d="M88 5L20 35" stroke="#f00" stroke-width="5"/><path d="M0 41L18 17L30 42z" fill="#f00"/></svg>
        <div class="step">1</div>
      </aside>
    </div>

    <footer class="status">
      <span>4/4 페이지</span>
      <div class="zoom">
        <button>-</button><input type="range" min="10" max="190" value="83" aria-label="확대/축소"><button>+</button><output>83%</output>
        <button aria-label="페이지에 맞춤"><svg class="ico w36" viewBox="0 0 24 24"><rect x="1.500" y="4" width="21" height="16" rx="2"/><path d="M5 10V7.500h3M16 7.500h3V10M19 14v2.500h-3M8 16.500H5V14"/></svg></button>
      </div>
    </footer>
  </div>
</div>
</body>
</html>
```
FILE: styles.css
```css
* { box-sizing: border-box; margin: 0; padding: 0; }
body {
  height: 100vh; display: flex; flex-direction: column; overflow: hidden;
  background: #3b3b3b; color: #242424;
  font-family: "Noto Sans", "Noto Sans CJK KR", sans-serif; font-size: 34px; line-height: 1.2;
}
button, input { font: inherit; color: inherit; background: none; border: 0; outline: 0; }
button { display: flex; align-items: center; justify-content: center; white-space: nowrap; }
a { color: inherit; text-decoration: none; }
svg { display: block; flex: none; overflow: visible; }
.defs { position: absolute; width: 0; height: 0; }
h1, h2, h3, h4, h5 { font-weight: 400; white-space: nowrap; }

.ico { fill: none; stroke: currentColor; stroke-width: 1.5; stroke-linejoin: round; }
.ico .solid, symbol .solid { fill: currentColor; stroke: none; }
.solid { fill: currentColor; stroke: none; }
.w16 { width: 16px; height: 16px; stroke-width: 2; }
.w22 { width: 22px; height: 22px; stroke-width: 2; }
.w24 { width: 24px; height: 24px; stroke-width: 2; }
.w26 { width: 26px; height: 26px; stroke-width: 2.5; }
.w28 { width: 28px; height: 28px; stroke-width: 2; }
.w30 { width: 30px; height: 30px; stroke-width: 2; }
.w34 { width: 34px; height: 34px; }
.w36 { width: 36px; height: 36px; }
.w38 { width: 38px; height: 38px; }
.w40 { width: 40px; height: 40px; }
.w44 { width: 44px; height: 44px; }
.w46 { width: 46px; height: 46px; }
.w50 { width: 50px; height: 46px; }
.w56 { width: 56px; height: 56px; stroke-width: 1.4; }

/* browser chrome */
.browser { color: #fff; flex: none; }
.tabstrip { display: flex; height: 91px; background: #383e4a; border-bottom: 2px solid #5b626d; font-size: 30px; }
.profile { width: 194px; height: 75px; margin: 8px 0 0 21px; border: 3px solid #fff; border-radius: 38px; gap: 18px; }
.profile svg { width: 60px; height: 60px; margin-left: -10px; }
.tabmenu { width: 132px; }
.tab { width: 638px; height: 91px; display: flex; align-items: center; padding: 0 28px 0 20px; }
.tab.active { background: #3b3b3b; border: 2px solid #5b626d; border-bottom: 0; border-radius: 20px 20px 0 0; padding-left: 18px; margin-left: 6px; padding-right: 24px; }
.tab span { flex: 1; white-space: nowrap; line-height: 44px; margin: 0 16px 0 26px; }
.tab.active span { -webkit-mask-image: linear-gradient(90deg, #000 90%, transparent); mask-image: linear-gradient(90deg, #000 90%, transparent); }
.pbi { width: 39px; height: 42px; }
.newtab { width: 114px; border-left: 2px solid #6c727c; height: 54px; align-self: center; }
.winbtns { margin-left: auto; display: flex; }
.winbtns button { width: 122px; }
.navbar { display: flex; align-items: center; height: 107px; padding: 0 4px 0 17px; }
.navbar > button { width: 116px; }
.navbar > button.nb { width: 118px; }
.address { flex: 1; display: flex; align-items: center; height: 84px; margin: 0 14px 0 18px; padding: 0 40px 0 46px; background: #292929; border: 3px solid #5e5e5e; border-radius: 42px; font-size: 35px; color: #9a9a9a; }
.address > svg { color: #e0e0e0; }
.url { flex: 1; margin-left: 41px; white-space: nowrap; }
.url b { font-weight: 400; color: #fff; }
.lang { font-size: 34px; width: 114px; font-family: "Noto Sans", "Noto Sans CJK JP", sans-serif; }
.address button:last-child { width: 100px; margin-right: -28px; }

/* app shell */
.app { flex: 1; min-height: 0; margin: 0 11px 9px; display: grid; grid-template: 127px minmax(0, 1fr) / 180px minmax(0, 1fr); background: #f0f0f0; border-radius: 22px; overflow: hidden; }
.top { grid-column: 1 / -1; display: grid; grid-template-columns: 1414fr 1245fr 1415fr; align-items: center; color: #424242; }
.crumb { display: flex; align-items: center; }
.waffle { width: 181px; }
.waffle svg { width: 38px; height: 38px; }
h1 { margin-left: 21px; padding-right: 21px; border-right: 2px solid #8a8a8a; font-size: 36px; line-height: 54px; color: #242424; }
.updated { margin-left: 42px; font-size: 39px; gap: 26px; }
.search { height: 84px; display: flex; align-items: center; gap: 21px; padding-left: 28px; background: #fff; border: 3px solid #d6d6d6; border-radius: 8px; color: #616161; }
.search input { flex: 1; font-size: 38px; }
::placeholder { color: #707070; opacity: 1; }
.account { display: flex; justify-content: flex-end; align-items: center; }
.account button { width: 128px; }
.notify { position: relative; }
.badge { position: absolute; left: 63px; top: -20px; width: 42px; height: 42px; border-radius: 50%; background: #117865; color: #fff; font-size: 26px; line-height: 42px; }
.avatar { width: 96px; height: 96px; fill: none; stroke: #fff; stroke-width: 4; }
.avatar circle:first-child { stroke: none; }

/* left rail */
.rail { display: flex; flex-direction: column; align-items: center; padding-top: 3px; font-size: 28px; line-height: 40px; text-align: center; color: #424242; box-shadow: inset -10px 0 12px -8px #d4d4d4; }
.rail a { width: 100%; height: 150px; padding-top: 21px; display: flex; flex-direction: column; align-items: center; gap: 10px; white-space: nowrap; flex: none; }
.rail a.tight { gap: 6px; height: 149px; }
.rail .me svg { color: #117865; width: 50px; }
.rail .en { font-size: 25px; }
.rail hr { width: 103px; border: 0; border-top: 2px solid #d1d1d1; margin: -3px 0 6px; flex: none; }
.rail a.current { height: 170px; padding-top: 15px; gap: 9px; margin-top: 8px; font-weight: 600; color: #242424; line-height: 36px; border-left: 4px solid #117865; margin-left: 13px; padding-right: 17px; }
.rep { width: 57px; height: 56px; }
.more { margin-top: 58px; }
.rail a.brand { margin-top: auto; height: 132px; padding-top: 5px; gap: 4px; }
.logo { width: 52px; height: 64px; }

/* ribbon */
.work { display: flex; flex-direction: column; min-width: 0; }
.ribbon { height: 108px; flex: none; display: flex; align-items: center; padding-left: 31px; background: #ebebeb; border-top: 2px solid #dedede; color: #333; gap: 60px; }
.ribbon > button { gap: 18px; }
.ribbon .ico { color: #424242; }
.tools { margin-left: auto; display: flex; align-items: center; }
.tools .t { width: 119px; }
.tools .s { width: 110px; }
.tools .s:last-child { width: 100px; }
.tools .d { width: 151px; justify-content: space-between; padding: 0 20px 0 36px; }
.copilot { gap: 15px; margin-right: 18px; font-size: 32px; }
.copilot svg { width: 44px; height: 40px; }

/* canvas */
.stage { flex: 1; min-height: 0; display: flex; }
.canvas { flex: 1; min-width: 0; display: flex; flex-direction: column; background: #fff; }
.page { display: grid; grid-template-columns: 1250fr 1372fr; gap: 61px; padding: 45px 104px 50px 54px; background: #d1e7ff; border-bottom: 4px dotted #333; border-right: 2px solid #a8a8a8; }
.col { display: flex; flex-direction: column; justify-content: flex-end; min-width: 0; }
.title-card { height: 224px; background: #fff; text-align: center; font-size: 142px; line-height: 228px; color: #252423; }
.hover { display: flex; justify-content: flex-end; height: 64px; gap: 11px; padding-right: 22px; color: #616161; }
.hover button { width: 63px; background: #fff; }
.hover.right { height: 64px; padding: 0 0 4px; gap: 9px; margin-right: -3px; }
.hover.right button { width: 65px; }
.visual { position: relative; background: #fff; }
.chart { width: 100%; height: auto; }
.chart text { dominant-baseline: central; fill: #252423; }
.grid path { stroke: #cfcfcf; stroke-width: 3; stroke-dasharray: 3 8; fill: none; }
.bubbles circle { fill: #118dff; fill-opacity: .35; }
.bubbles .b2 { fill-opacity: .73; }
.bubbles .b3 { fill-opacity: .87; }
.chart .vtitle { font-size: 43px; }
.chart .ytick text { font-size: 25px; text-anchor: end; fill: #605e5c; }
.chart .xtick text { font-size: 25px; text-anchor: middle; fill: #605e5c; }
.chart .names text { font-size: 28px; text-anchor: middle; fill: #605e5c; }
.chart .atitle text { font-size: 38px; text-anchor: middle; }
.chart .legend text { font-size: 32px; fill: #605e5c; }
.chart .legend .md { font-weight: 500; fill: #444; }
.chart .sb { font-weight: 600; font-size: 37px; }
.chart .atitle .sb { font-size: 32px; }
.na { fill: #6b007b; }
.as { fill: #e66c37; }
.eu { fill: #12239e; }
.frame { fill: none; stroke: #b3b3b3; stroke-width: 3; }
.handles { fill: #999; }
.tip { position: absolute; left: 320px; top: 389px; width: 529px; height: 241px; background: #fff; box-shadow: 0 14px 34px rgba(0, 0, 0, .2); padding-top: 43px; }
.tip::before { content: ""; position: absolute; left: -18px; top: 20px; border: 17px solid transparent; border-left: 0; border-right: 18px solid #fff; }
.tip dl { display: grid; grid-template-columns: 311px 1fr; column-gap: 34px; font-size: 38px; line-height: 53px; color: #333; white-space: nowrap; }
.tip dt { text-align: right; }
.tip .num { font-size: 34px; }
.mark { position: absolute; border: 9px solid #f00; }
.tip .mark { left: -6px; top: 132px; width: 530px; height: 88px; }
.below { flex: 1; border-right: 2px solid #a8a8a8; }

.pagetabs { display: flex; height: 95px; flex: none; background: #f3f2f1; margin-right: -88px; border-bottom: 2px solid #d8d8d8; position: relative; z-index: 1; }
.views { width: 342px; display: flex; align-items: center; border-right: 2px solid #999; }
.desk { width: 64px; margin: 8px 0 0 28px; }
.desk svg { width: 64px; height: 62px; }
.phone { margin-left: 69px; }
.phone svg { width: 34px; height: 54px; fill: none; stroke: #555; stroke-width: 3; }
.arrow { margin-left: 44px; }
.arrow svg { width: 14px; height: 20px; fill: none; stroke: #ccc; stroke-width: 2; }
.phone + .arrow { margin-left: 56px; }
.pt { background: #fff; border-right: 2px solid #ccc; padding: 0 54px; }
.pt.on { box-shadow: inset 0 -10px #117865; }
.add { width: 105px; background: #117865; }
.add svg { width: 28px; height: 28px; stroke: #fff; stroke-width: 6; }

/* side panes */
.filters { width: 88px; flex: none; background: #fff; display: flex; flex-direction: column; align-items: center; padding-top: 38px; margin-bottom: 95px; }
.flip { transform: rotate(180deg); }
.turned { margin: 50px 0 0 18px; transform: rotate(90deg); stroke-width: 3; }
.filters h3 { writing-mode: vertical-rl; text-orientation: sideways; font-size: 41px; font-weight: 600; margin-top: 25px; margin-left: 8px; }
.viz { width: 482px; flex: none; background: #f3f2f1; border-left: 2px solid #e1dfdd; display: flex; flex-direction: column; position: relative; z-index: 2; }
.ph { display: flex; align-items: center; justify-content: space-between; height: 100px; padding: 0 25px 0 22px; flex: none; }
.ph h3 { font-size: 44px; font-weight: 600; }
.viz h4 { padding-left: 22px; font-weight: 500; line-height: 42px; }
.modes { display: flex; justify-content: space-between; padding: 11px 20px 0; }
.modes button { width: 86px; height: 86px; border-radius: 6px; }
.modes .on { background: #d2d0ce; }
.modes svg { width: 62px; height: 62px; }
.line { fill: none; stroke: #252423; stroke-width: 3; }
.notch { height: 24px; width: 100%; margin-top: 12px; fill: none; stroke: #888; stroke-width: 2; flex: none; }
.gallery { display: grid; grid-template-columns: repeat(6, 75px); grid-auto-rows: 74px; padding: 16px 0 0 16px; height: 549px; border-bottom: 2px solid #e1dfdd; align-items: center; align-content: start; flex: none; }
.gallery button { width: 63px; height: 63px; justify-self: center; }
.gallery .on { border: 2px solid #252423; background: #faf9f8; }
.gallery svg { width: 49px; height: 48px; stroke-width: 2; fill: none; }
.k { fill: none; stroke: #333; stroke-width: 3; }
.w { fill: #fafafa; stroke: #555; }
.w.d { stroke: #333; }
.w.k1 { stroke: #444; stroke-width: 3; }
.wf { fill: #fafafa; }
.pf { fill: #f3f2f1; stroke: #666; }
.g { fill: #c8c6c4; stroke: #797775; }
.b { fill: #83beec; stroke: #1068b8; }
.o { fill: #fff; stroke: #dd6b00; stroke-width: 3; }
.kf { fill: #333; }
.bf { fill: #83beec; stroke: #4a9be0; }
.gf { fill: #2a9a48; }
.bl { stroke: #1068b8; stroke-width: 3; }
.gl { stroke: #8a8886; }
.pl { fill: #fff; stroke: #8b2c9e; stroke-width: 3; }
.al { fill: #fff; stroke: #1282e0; stroke-width: 3; }
.n123 { font-size: 21px; text-anchor: middle; fill: #3a96dd; stroke: none; }

.wells { position: relative; flex: 1; min-height: 0; padding: 0 15px 0 10px; overflow: hidden; margin-bottom: 8px; }
.wells h5 { font-size: 34px; line-height: 46px; padding: 21px 0 0 22px; height: 81px; }
.wells .well + h5 { height: 86px; }
.well { position: relative; height: 75px; background: #fff; border: 3px dashed #c8c6c4; padding: 5px; }
.well.tall { height: 96px; }
.pill { height: 59px; display: flex; align-items: center; background: #edebe9; border: 3px solid #c8c6c4; border-radius: 4px; padding: 0 13px 0 11px; }
.pill span { flex: 1; }
.pill .w22 { margin-right: 24px; }
.empty { padding-left: 28px; line-height: 54px; white-space: nowrap; }
.well .mark { left: -6px; top: -8px; width: 445px; height: 90px; }
.wells .well + .drill { height: 74px; color: #444; }
.cross { display: flex; align-items: center; justify-content: space-between; height: 48px; margin-top: 14px; padding: 0 43px 0 22px; color: #444; }
.cross input { appearance: none; width: 86px; height: 42px; border: 3px solid #8a8886; border-radius: 21px; background: #fff; clip-path: inset(0 0 4px 0); }
.cross input::before { content: ""; display: block; width: 22px; height: 22px; margin: 7px 0 0 11px; border-radius: 50%; background: #605e5c; }
.thumb { position: absolute; right: 0; top: 6px; width: 16px; height: 793px; border-radius: 8px; background: #d2cfce; }

.data { width: 481px; flex: none; background: #f3f2f1; border-left: 2px solid #e1dfdd; display: flex; flex-direction: column; position: relative; z-index: 3; }
.find { display: flex; align-items: center; gap: 20px; height: 64px; margin: 22px 11px 0; padding-left: 30px; background: #fff; border: 2px solid #d1d1d1; border-bottom-color: #555; border-radius: 8px; color: #616161; }
.find input { width: 300px; font-size: 38px; }
.tree { flex: 1; min-height: 0; overflow: hidden; margin: 21px 0 20px; }
.tree > :first-child { margin-top: -34px; }
.f, .tb { height: 64px; display: flex; align-items: center; white-space: nowrap; color: #333; }
.f { padding-left: 117px; }
.f > .ico, .f > i { width: 34px; margin: 0 15px 0 22px; flex: none; }
.f.sub { padding-left: 156px; }
.f.sub > .ico { margin-left: 20px; }
.f > .end { width: 24px; margin: 0 45px 0 auto; }
.f input { appearance: none; width: 32px; height: 32px; border: 2px solid #8a8886; border-radius: 4px; flex: none; }
.f input:checked { background: #117865; border-color: #5c8a80; }
.f input:checked::before { content: ""; display: block; width: 19px; height: 10px; margin: 5px 0 0 4px; border: solid #fff; border-width: 0 0 3px 3px; transform: rotate(-45deg); }
.tb { padding-left: 39px; position: relative; }
.tb > .w34 { margin: 0 15px 0 16px; }
.tb.sub { padding-left: 77px; }
.tb > .w38 { margin: 0 14px 0 16px; }
.ok { position: absolute; left: 93px; top: 32px; width: 32px; height: 32px; border-radius: 50%; background: #117865; }
.ok::before { content: ""; display: block; width: 14px; height: 8px; margin: 9px 0 0 9px; border: solid #fff; border-width: 0 0 3px 3px; transform: rotate(-45deg); }
.bar { position: absolute; right: 11px; top: 301px; bottom: 20px; width: 21px; background: #c6c6c6; }
.row-mark { left: 51px; top: 1500px; width: 397px; height: 89px; }
.pointer { position: absolute; left: -33px; top: 1544px; width: 90px; height: 50px; fill: none; }
.step { position: absolute; left: -24px; top: 1335px; width: 154px; height: 154px; border: 14px solid #c90000; border-radius: 50%; background: #fff; color: #c90000; font: 700 94px/122px "Noto Sans", sans-serif; text-align: center; }

.status { height: 63px; flex: none; display: flex; align-items: center; justify-content: space-between; background: #f5f5f5; padding: 0 52px 0 12px; color: #444; }
.zoom { display: flex; align-items: center; gap: 20px; }
.zoom input { appearance: none; width: 262px; height: 3px; background: #555; }
.zoom input::-webkit-slider-thumb { appearance: none; width: 10px; height: 32px; background: #444; }
.zoom output { margin: 0 30px 0 12px; font-size: 32px; }
```
